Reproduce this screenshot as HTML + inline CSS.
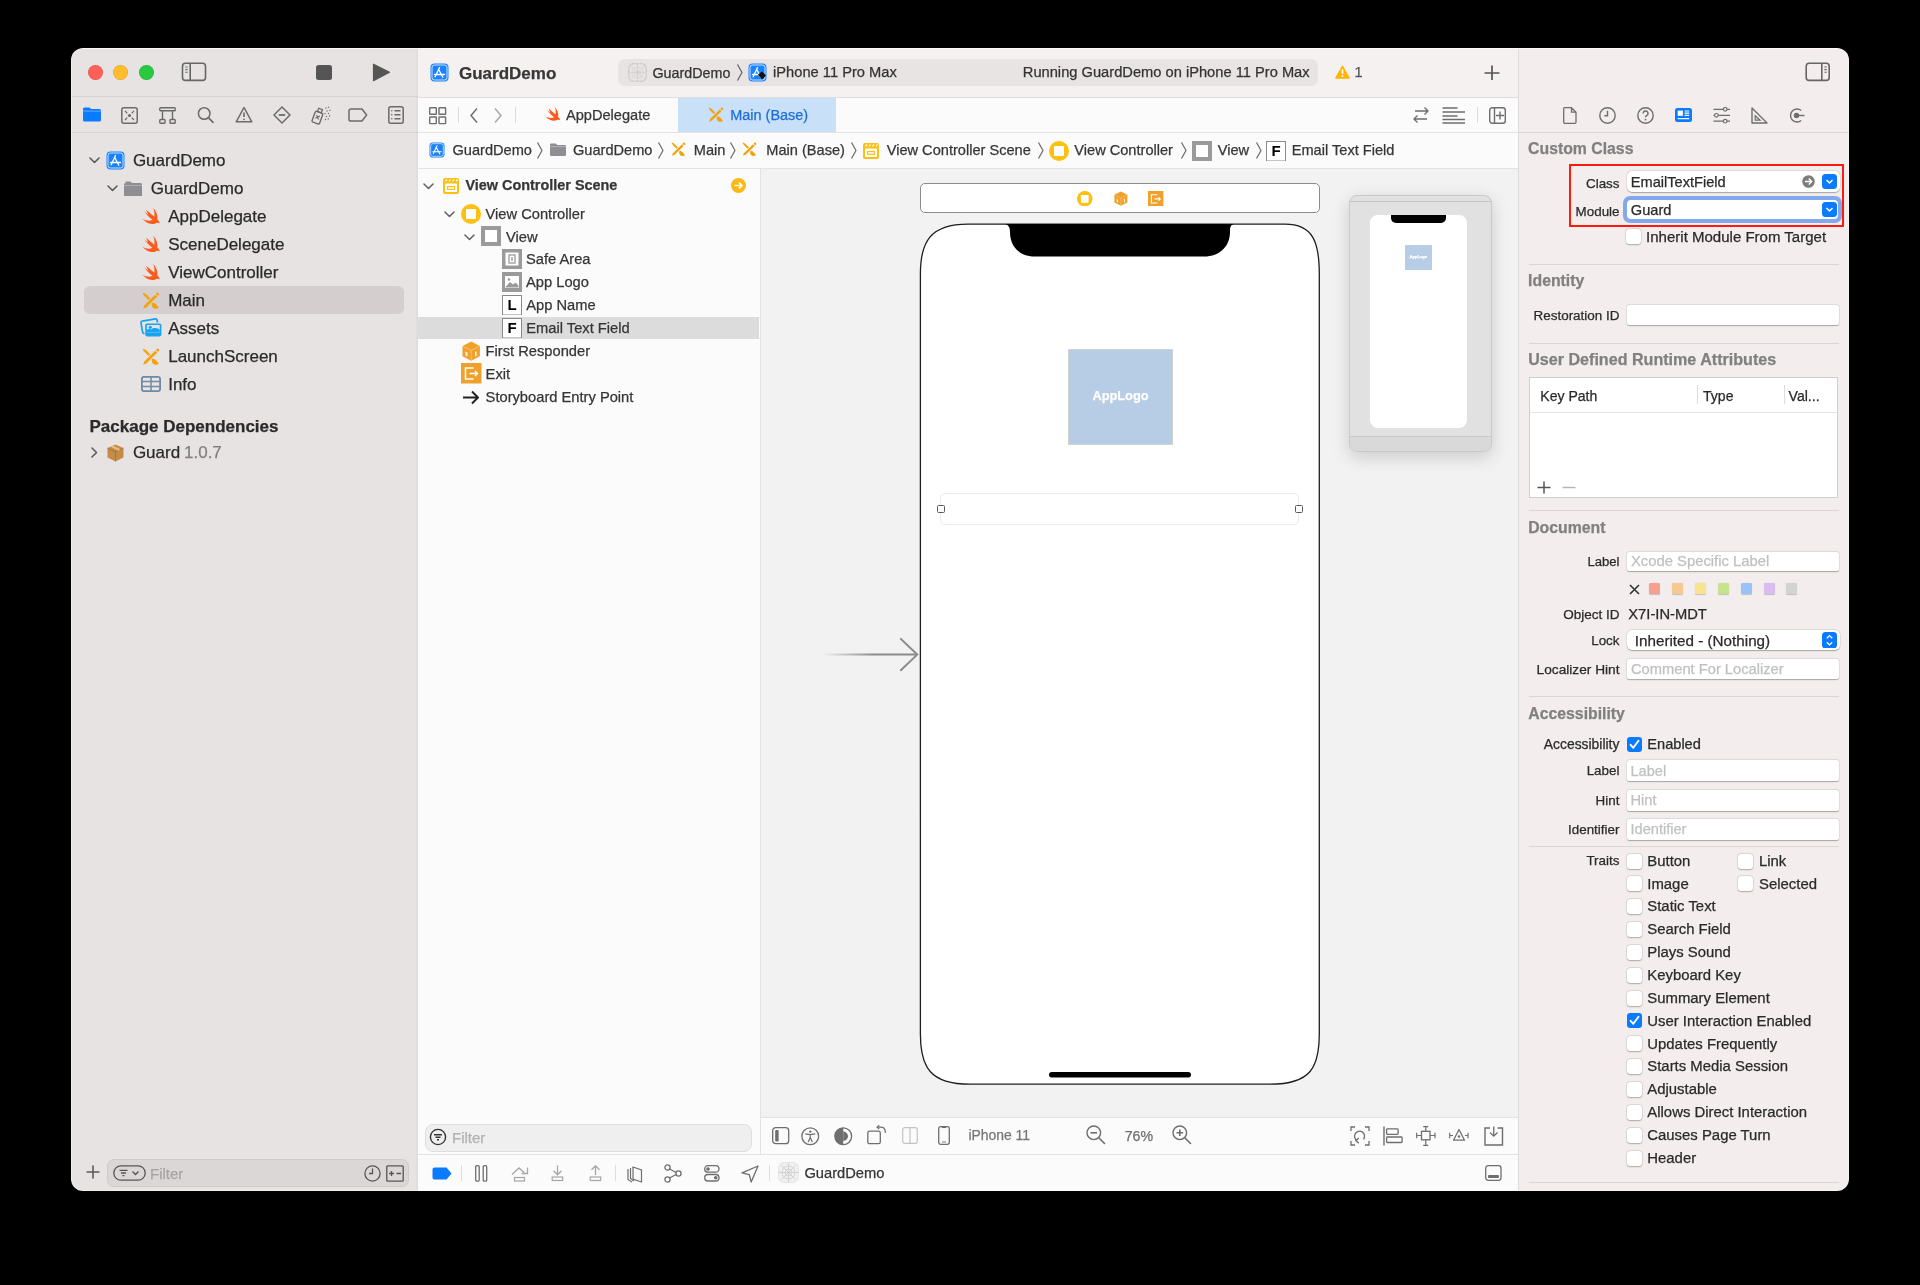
<!DOCTYPE html>
<html><head><meta charset="utf-8"><title>Xcode</title>
<style>
html,body{margin:0;padding:0;}
body{width:1920px;height:1285px;overflow:hidden;background:#000;position:relative;font-family:"Liberation Sans",sans-serif;}
#w{position:absolute;left:0;top:0;width:1920px;height:1285px;clip-path:inset(48px 71px 94px 71px round 12px);will-change:transform;}
#w div,#w svg{position:absolute;}
.t{white-space:nowrap;line-height:1;-webkit-text-stroke:0.25px currentColor;}
</style></head><body><div id="w">
<div style="left:71px;top:48px;width:1778px;height:1143px;background:#fbfbfb;"></div>
<div style="left:71px;top:48px;width:347px;height:1143px;background:#e8e3e3;"></div>
<div style="left:418px;top:48px;width:1100px;height:49px;background:#f6f1f1;"></div>
<div style="left:1518px;top:48px;width:331px;height:1143px;background:#f3eded;"></div>
<div style="left:71px;top:96px;width:347px;height:1px;background:#d9d4d4;"></div>
<div style="left:71px;top:132px;width:347px;height:1px;background:#d9d4d4;"></div>
<div style="left:415px;top:48px;width:3px;height:1143px;background:linear-gradient(90deg,rgba(0,0,0,0),rgba(0,0,0,0.04));"></div>
<div style="left:418px;top:97px;width:1100px;height:36px;background:#fbfbfb;"></div>
<div style="left:418px;top:97px;width:1100px;height:1px;background:#e0dddd;"></div>
<div style="left:418px;top:132px;width:1100px;height:1px;background:#e3e3e3;"></div>
<div style="left:418px;top:133px;width:1100px;height:35px;background:#fbfbfb;"></div>
<div style="left:418px;top:168px;width:1100px;height:1px;background:#e3e3e3;"></div>
<div style="left:418px;top:169px;width:342px;height:985px;background:#fbfbfb;"></div>
<div style="left:760px;top:169px;width:1px;height:985px;background:#e3e3e3;"></div>
<div style="left:761px;top:169px;width:757px;height:948px;background:#f2f2f2;"></div>
<div style="left:760px;top:1117px;width:758px;height:1px;background:#e3e3e3;"></div>
<div style="left:761px;top:1118px;width:757px;height:36px;background:#fbfbfb;"></div>
<div style="left:418px;top:1154px;width:1100px;height:1px;background:#e3e3e3;"></div>
<div style="left:418px;top:1155px;width:1100px;height:36px;background:#fbfbfb;"></div>
<div style="left:1517.5px;top:48px;width:1.5px;height:1143px;background:#e0dbdb;"></div>
<div style="left:1518px;top:132px;width:331px;height:1px;background:#dcd7d7;"></div>
<div style="left:71px;top:48px;width:1778px;height:1143px;box-sizing:border-box;border:1px solid rgba(255,255,255,0.35);border-radius:12px;"></div>
<div style="left:83px;top:48px;width:1754px;height:1px;background:rgba(255,255,255,0.55);"></div>
<div style="left:87.9px;top:64.8px;width:15px;height:15px;border-radius:50%;background:#fe5f57;box-shadow:inset 0 0 0 0.5px rgba(0,0,0,0.12);"></div>
<div style="left:113.2px;top:64.8px;width:15px;height:15px;border-radius:50%;background:#febc2e;box-shadow:inset 0 0 0 0.5px rgba(0,0,0,0.12);"></div>
<div style="left:138.7px;top:64.8px;width:15px;height:15px;border-radius:50%;background:#28c840;box-shadow:inset 0 0 0 0.5px rgba(0,0,0,0.12);"></div>
<svg style="left:181px;top:62px;" width="26" height="20" viewBox="0 0 26 20"><rect x="1.5" y="1.2" width="23" height="17.2" rx="3" fill="none" stroke="#666" stroke-width="1.6"/><path d="M9.2 1.2 V18.4" stroke="#666" stroke-width="1.6"/><path d="M4.3 5 H6.6 M4.3 7.6 H6.6 M4.3 10.2 H6.6" stroke="#666" stroke-width="1.1"/></svg>
<div style="left:316px;top:64.8px;width:15.5px;height:15.2px;background:#555;border-radius:2.5px;"></div>
<svg style="left:372px;top:63px;" width="19" height="19" viewBox="0 0 19 19"><path d="M1.5 1.2 L17.5 9.3 L1.5 17.6 Z" fill="#555" stroke="#555" stroke-width="1.2" stroke-linejoin="round"/></svg>
<svg style="left:83px;top:107px;" width="18" height="15" viewBox="0 0 18 15"><path d="M1.5 0.5 h5 l1.6 1.6 h8.4 a1.5 1.5 0 0 1 1.5 1.5 v9.4 a1.5 1.5 0 0 1 -1.5 1.5 h-15 a1.5 1.5 0 0 1 -1.5 -1.5 v-11 a1.5 1.5 0 0 1 1.5 -1.5z" fill="#0a7aff"/><rect x="0" y="3.6" width="18" height="0.9" fill="#e8e3e3" fill-opacity="0.5"/></svg>
<svg style="left:121px;top:107px;" width="17" height="17" viewBox="0 0 17 17"><rect x="0.8" y="0.8" width="15.4" height="15.4" rx="2" fill="none" stroke="#6b6b6b" stroke-width="1.5"/><path d="M4 4 L6.3 6.3 M13 4 L10.7 6.3 M4 13 L6.3 10.7 M13 13 L10.7 10.7" stroke="#6b6b6b" stroke-width="1.2"/><circle cx="8.5" cy="8.5" r="1.6" fill="#6b6b6b"/></svg>
<svg style="left:159px;top:107px;" width="17" height="17" viewBox="0 0 17 17"><rect x="0.8" y="0.8" width="15.4" height="3" rx="0.8" fill="none" stroke="#6b6b6b" stroke-width="1.4"/><path d="M3.5 3.8 V12.5 M13.5 3.8 V12.5" stroke="#6b6b6b" stroke-width="1.4"/><rect x="0.8" y="12.5" width="5.2" height="3.7" rx="0.8" fill="none" stroke="#6b6b6b" stroke-width="1.4"/><rect x="11" y="12.5" width="5.2" height="3.7" rx="0.8" fill="none" stroke="#6b6b6b" stroke-width="1.4"/></svg>
<svg style="left:197px;top:106px;" width="18" height="18" viewBox="0 0 18 18"><circle cx="7.2" cy="7.5" r="5.8" fill="none" stroke="#6b6b6b" stroke-width="1.5"/><path d="M11.4 11.7 L16 16.3" stroke="#6b6b6b" stroke-width="1.7" stroke-linecap="round"/></svg>
<svg style="left:235px;top:106px;" width="18" height="18" viewBox="0 0 18 18"><path d="M9 1.5 L16.8 15.8 H1.2 Z" fill="none" stroke="#6b6b6b" stroke-width="1.5" stroke-linejoin="round"/><path d="M9 6.5 V11" stroke="#6b6b6b" stroke-width="1.6"/><circle cx="9" cy="13.3" r="0.9" fill="#6b6b6b"/></svg>
<svg style="left:273px;top:106px;" width="18" height="18" viewBox="0 0 18 18"><path d="M9 1 L17 9 L9 17 L1 9 Z" fill="none" stroke="#6b6b6b" stroke-width="1.5" stroke-linejoin="round"/><path d="M5.8 9 H12.2" stroke="#6b6b6b" stroke-width="1.8"/></svg>
<svg style="left:310px;top:106px;" width="22" height="19" viewBox="0 0 22 19"><g transform="rotate(20 8 10)"><rect x="4" y="6" width="8" height="11.5" rx="1.5" fill="none" stroke="#6b6b6b" stroke-width="1.4"/><rect x="6" y="2.5" width="4" height="3.5" fill="none" stroke="#6b6b6b" stroke-width="1.3"/><path d="M6.3 9.5 L9.7 13 M9.7 9.5 L6.3 13" stroke="#6b6b6b" stroke-width="1.2"/></g><g fill="#6b6b6b"><circle cx="16" cy="2" r="0.7"/><circle cx="18.5" cy="1.2" r="0.7"/><circle cx="17" cy="5" r="0.7"/><circle cx="20" cy="4.2" r="0.7"/><circle cx="15" cy="7.5" r="0.7"/><circle cx="18.5" cy="7.5" r="0.7"/><circle cx="16.5" cy="10.5" r="0.7"/><circle cx="19.5" cy="10" r="0.7"/><circle cx="15.5" cy="13.5" r="0.7"/><circle cx="18.2" cy="13" r="0.7"/></g></svg>
<svg style="left:348px;top:108px;" width="20" height="14" viewBox="0 0 20 14"><path d="M2.8 1 H14 L18.6 7 L14 13 H2.8 A1.8 1.8 0 0 1 1 11.2 V2.8 A1.8 1.8 0 0 1 2.8 1 Z" fill="none" stroke="#6b6b6b" stroke-width="1.5" stroke-linejoin="round"/></svg>
<svg style="left:388px;top:106px;" width="16" height="18" viewBox="0 0 16 18"><rect x="0.8" y="0.8" width="14.4" height="16.4" rx="2" fill="none" stroke="#6b6b6b" stroke-width="1.5"/><path d="M6.5 4.8 H12.5 M6.5 8.8 H12.5 M6.5 12.8 H12.5" stroke="#6b6b6b" stroke-width="1.6"/><g fill="#6b6b6b"><circle cx="3.8" cy="4.8" r="0.8"/><circle cx="3.8" cy="8.8" r="0.8"/><circle cx="3.8" cy="12.8" r="0.8"/></g></svg>
<div style="left:84px;top:286px;width:320px;height:28px;background:#d4cece;border-radius:6px;"></div>
<svg style="left:89px;top:157px;" width="11" height="7" viewBox="0 0 11 7"><path d="M1 1 L5.5 5.5 L10 1" fill="none" stroke="#5c5c5c" stroke-width="1.6" stroke-linecap="round" stroke-linejoin="round"/></svg>
<svg style="left:106px;top:150.5px;" width="19" height="19" viewBox="0 0 19 19"><rect x="0.5" y="0.5" width="18" height="18" rx="4.0" fill="#1a82fb"/><rect x="2.0" y="2.0" width="15.0" height="15.0" rx="2.5" fill="none" stroke="#fff" stroke-opacity="0.85" stroke-width="0.9"/><g fill="none" stroke="#fff" stroke-width="1.3" stroke-linecap="round"><path d="M9.5 4.5 L5.2 13.8 M8.6 6.3 L12.8 14.2 M4.5 11.5 L14.5 11.5"/></g></svg>
<div class="t" style="left:132.9px;top:152.2px;font-size:17px;color:#2a2a2a;">GuardDemo</div>
<svg style="left:107px;top:185px;" width="11" height="7" viewBox="0 0 11 7"><path d="M1 1 L5.5 5.5 L10 1" fill="none" stroke="#5c5c5c" stroke-width="1.6" stroke-linecap="round" stroke-linejoin="round"/></svg>
<svg style="left:124px;top:181px;" width="18" height="15" viewBox="0 0 18 15"><path d="M1.5 0.5 h5 l1.5 1.5 h8.5 a1.5 1.5 0 0 1 1.5 1.5 v11.5 a1.5 1.5 0 0 1 -1.5 1.5 h-15 a1.5 1.5 0 0 1 -1.5 -1.5 v-11.5 a1.5 1.5 0 0 1 1.5 -1.5z" fill="#8e8e93"/><rect x="0" y="4" width="18" height="0.8" fill="#fff" fill-opacity="0.35"/></svg>
<div class="t" style="left:150.8px;top:180.2px;font-size:17px;color:#2a2a2a;">GuardDemo</div>
<svg style="left:142.3px;top:207.5px;" width="18" height="17" viewBox="0 0 18 17"><path d="M11.2 0 C14.5 3 16 7.5 15.3 11.5 C16.5 12.5 17.5 14 17.7 15.5 C16.6 14.8 15.2 14.6 14 15.2 C11 16.8 6 16.8 0.3 10.8 C4 13 8 13.2 10.5 11.8 C7.5 9.5 4.5 6.5 2 2.9 C3.5 4.3 5 5.5 6.2 6.4 C5.5 5 4.6 3.3 4.1 1.5 C6.5 4 9 6.2 12.3 8.7 C12.8 6 12.5 3 11.2 0 Z" fill="#fd5a1e"/></svg>
<div class="t" style="left:168.2px;top:208.2px;font-size:17px;color:#2a2a2a;">AppDelegate</div>
<svg style="left:142.3px;top:235.5px;" width="18" height="17" viewBox="0 0 18 17"><path d="M11.2 0 C14.5 3 16 7.5 15.3 11.5 C16.5 12.5 17.5 14 17.7 15.5 C16.6 14.8 15.2 14.6 14 15.2 C11 16.8 6 16.8 0.3 10.8 C4 13 8 13.2 10.5 11.8 C7.5 9.5 4.5 6.5 2 2.9 C3.5 4.3 5 5.5 6.2 6.4 C5.5 5 4.6 3.3 4.1 1.5 C6.5 4 9 6.2 12.3 8.7 C12.8 6 12.5 3 11.2 0 Z" fill="#fd5a1e"/></svg>
<div class="t" style="left:168.2px;top:236.2px;font-size:17px;color:#2a2a2a;">SceneDelegate</div>
<svg style="left:142.3px;top:263.5px;" width="18" height="17" viewBox="0 0 18 17"><path d="M11.2 0 C14.5 3 16 7.5 15.3 11.5 C16.5 12.5 17.5 14 17.7 15.5 C16.6 14.8 15.2 14.6 14 15.2 C11 16.8 6 16.8 0.3 10.8 C4 13 8 13.2 10.5 11.8 C7.5 9.5 4.5 6.5 2 2.9 C3.5 4.3 5 5.5 6.2 6.4 C5.5 5 4.6 3.3 4.1 1.5 C6.5 4 9 6.2 12.3 8.7 C12.8 6 12.5 3 11.2 0 Z" fill="#fd5a1e"/></svg>
<div class="t" style="left:168.2px;top:264.2px;font-size:17px;color:#2a2a2a;">ViewController</div>
<svg style="left:142px;top:291.5px;" width="18" height="18" viewBox="0 0 18 18"><g transform="scale(1.0)" fill="#f4a20a"><path d="M1.1 16.6 L2.3 13.4 L13.2 2.8 L15.1 4.7 L4.3 15.4 Z"/><circle cx="15.7" cy="2.1" r="1.5"/><path d="M0.6 0.7 C2 0.9 3.2 1.5 4.2 2.3 L8.2 6.4 L6.6 8 L2.6 4 C1.6 3 1 1.9 0.6 0.7 Z"/><path d="M9.6 11.3 L11.4 10.4 C13.2 11.2 14.8 12.8 16.6 15.2 L16 16.5 C13.8 16.9 11.6 16.6 10.6 15.2 C9.9 14.1 9.6 12.7 9.6 11.3 Z"/></g></svg>
<div class="t" style="left:168.2px;top:292.2px;font-size:17px;color:#2a2a2a;">Main</div>
<svg style="left:140.3px;top:318px;" width="22" height="19" viewBox="0 0 22 19"><path d="M2.2 3.2 L15.5 0.9 A1.4 1.4 0 0 1 17.1 2 L17.5 4.6" fill="none" stroke="#16a4f2" stroke-width="1.7" stroke-linejoin="round"/><path d="M2.2 3.2 A1.4 1.4 0 0 0 1 4.8 L2.6 14.2 A1.4 1.4 0 0 0 4.4 15.3" fill="none" stroke="#16a4f2" stroke-width="1.7"/><rect x="5.2" y="5.4" width="16.2" height="13" rx="1.8" fill="#16a4f2"/><rect x="6.9" y="7" width="12.8" height="7.6" fill="#e8e3e3"/><path d="M6.9 12 C8.5 10.5 9.5 10.5 11 11.8 C12.5 9.8 15 9.2 19.7 11.5 V14.6 H6.9 Z" fill="#16a4f2"/><circle cx="10.3" cy="9.3" r="1.6" fill="#16a4f2"/></svg>
<div class="t" style="left:168.2px;top:320.2px;font-size:17px;color:#2a2a2a;">Assets</div>
<svg style="left:142px;top:347.5px;" width="18" height="18" viewBox="0 0 18 18"><g transform="scale(1.0)" fill="#f4a20a"><path d="M1.1 16.6 L2.3 13.4 L13.2 2.8 L15.1 4.7 L4.3 15.4 Z"/><circle cx="15.7" cy="2.1" r="1.5"/><path d="M0.6 0.7 C2 0.9 3.2 1.5 4.2 2.3 L8.2 6.4 L6.6 8 L2.6 4 C1.6 3 1 1.9 0.6 0.7 Z"/><path d="M9.6 11.3 L11.4 10.4 C13.2 11.2 14.8 12.8 16.6 15.2 L16 16.5 C13.8 16.9 11.6 16.6 10.6 15.2 C9.9 14.1 9.6 12.7 9.6 11.3 Z"/></g></svg>
<div class="t" style="left:168.2px;top:348.2px;font-size:17px;color:#2a2a2a;">LaunchScreen</div>
<svg style="left:141px;top:376px;" width="20" height="16" viewBox="0 0 20 16"><rect x="0.9" y="0.9" width="18.2" height="14.2" rx="2" fill="none" stroke="#6f8aa0" stroke-width="1.8"/><path d="M0.9 5.6 H19.1 M0.9 10.4 H19.1 M10 0.9 V15.1" stroke="#6f8aa0" stroke-width="1.5"/></svg>
<div class="t" style="left:168.2px;top:376.2px;font-size:17px;color:#2a2a2a;">Info</div>
<div class="t" style="left:89.5px;top:418.2px;font-size:17px;color:#2a2a2a;font-weight:bold;">Package Dependencies</div>
<svg style="left:91px;top:447px;" width="7" height="11" viewBox="0 0 7 11"><path d="M1 1 L5.5 5.5 L1 10" fill="none" stroke="#5c5c5c" stroke-width="1.6" stroke-linecap="round" stroke-linejoin="round"/></svg>
<svg style="left:107px;top:443.5px;" width="17" height="18" viewBox="0 0 17 18"><path d="M8.5 0.5 L16.5 4 V13.5 L8.5 17.5 L0.5 13.5 V4 Z" fill="#c58c48"/><path d="M0.5 4 L8.5 8 L16.5 4 M8.5 8 V17.5" stroke="#8a5a25" stroke-width="0.8" fill="none" stroke-opacity="0.6"/><path d="M4.5 2.2 L12.5 6" stroke="#e8c08a" stroke-width="2"/></svg>
<div class="t" style="left:132.9px;top:444.2px;font-size:17px;color:#2a2a2a;">Guard</div>
<div class="t" style="left:184px;top:444.2px;font-size:17px;color:#7f7f7f;">1.0.7</div>
<svg style="left:85px;top:1164px;" width="16" height="16" viewBox="0 0 16 16"><path d="M8 1.5 V14.5 M1.5 8 H14.5" stroke="#5a5a5a" stroke-width="1.6"/></svg>
<div style="left:107px;top:1159px;width:302px;height:28px;box-sizing:border-box;background:#dcd7d7;border:1px solid #d0cbcb;border-radius:7px;"></div>
<svg style="left:113px;top:1165px;" width="33" height="16" viewBox="0 0 33 16"><rect x="0.8" y="0.8" width="31.4" height="14.4" rx="7.2" fill="none" stroke="#555" stroke-width="1.3"/><path d="M6.5 5.3 H14.5 M8 8 H13 M9.5 10.7 H11.5" stroke="#555" stroke-width="1.3"/><path d="M19.5 6.5 L22.5 9.5 L25.5 6.5" fill="none" stroke="#555" stroke-width="1.4"/></svg>
<div class="t" style="left:150px;top:1165.68px;font-size:15px;color:#a8a4a4;">Filter</div>
<svg style="left:364px;top:1165px;" width="17" height="17" viewBox="0 0 17 17"><circle cx="8.5" cy="8.5" r="7.6" fill="none" stroke="#555" stroke-width="1.3"/><path d="M8.5 3.5 V8.5 H5" fill="none" stroke="#555" stroke-width="1.3"/></svg>
<svg style="left:386px;top:1165px;" width="18" height="17" viewBox="0 0 18 17"><rect x="0.8" y="0.8" width="16.4" height="15.4" rx="1" fill="none" stroke="#555" stroke-width="1.3"/><path d="M3 8.5 H8 M5.5 6 V11 M10.5 8.5 H15" stroke="#555" stroke-width="1.3"/></svg>
<svg style="left:430px;top:63px;" width="19" height="19" viewBox="0 0 19 19"><rect x="0.5" y="0.5" width="18" height="18" rx="4.0" fill="#1a82fb"/><rect x="2.0" y="2.0" width="15.0" height="15.0" rx="2.5" fill="none" stroke="#fff" stroke-opacity="0.85" stroke-width="0.9"/><g fill="none" stroke="#fff" stroke-width="1.3" stroke-linecap="round"><path d="M9.5 4.5 L5.2 13.8 M8.6 6.3 L12.8 14.2 M4.5 11.5 L14.5 11.5"/></g></svg>
<div class="t" style="left:459px;top:65.0px;font-size:17px;color:#383838;font-weight:bold;">GuardDemo</div>
<div style="left:618px;top:59px;width:700px;height:27px;background:#e9e4e4;border-radius:7px;"></div>
<svg style="left:627.5px;top:63px;" width="19" height="19" viewBox="0 0 19 19"><rect x="0.8" y="0.8" width="17.4" height="17.4" rx="4.5" fill="none" stroke="#b8b8b8" stroke-width="1.1" stroke-dasharray="1.3 0.9"/><g fill="none" stroke="#c4c4c4" stroke-width="0.8" stroke-dasharray="1 0.8"><circle cx="9.5" cy="9.5" r="5.5"/><circle cx="9.5" cy="9.5" r="2.8"/><path d="M0.8 9.5 H18.2 M9.5 0.8 V18.2 M3 3 L16 16 M16 3 L3 16"/></g></svg>
<div class="t" style="left:652.5px;top:65.52px;font-size:14.3px;color:#333;">GuardDemo</div>
<svg style="left:736px;top:63px;" width="8" height="19" viewBox="0 0 8 19"><path d="M1.5 1.5 L6 9.5 L1.5 17.5" fill="none" stroke="#555" stroke-width="1.1"/></svg>
<svg style="left:748.3px;top:63px;" width="19" height="19" viewBox="0 0 19 19"><rect x="0.5" y="0.5" width="18" height="18" rx="4.0" fill="#1a82fb"/><rect x="2.0" y="2.0" width="15.0" height="15.0" rx="2.5" fill="none" stroke="#fff" stroke-opacity="0.85" stroke-width="0.9"/><g fill="none" stroke="#fff" stroke-width="1.3" stroke-linecap="round"><path d="M9.5 4.5 L5.2 13.8 M8.6 6.3 L12.8 14.2 M4.5 11.5 L14.5 11.5"/></g><path d="M10 11.5 l4 -3 l4 4 l-4 4z" fill="#111"/></svg>
<div class="t" style="left:773px;top:65.33px;font-size:14.7px;color:#333;">iPhone 11 Pro Max</div>
<div class="t" style="right:610.4000000000001px;top:65.34px;font-size:14.68px;color:#333;">Running GuardDemo on iPhone 11 Pro Max</div>
<svg style="left:1335px;top:65px;" width="15" height="14" viewBox="0 0 15 14"><path d="M7.5 0.8 L14.5 13.2 H0.5 Z" fill="#fdb600" stroke="#fdb600" stroke-width="1" stroke-linejoin="round"/><path d="M7.5 4.3 V9" stroke="#fff" stroke-width="1.6"/><circle cx="7.5" cy="11" r="0.9" fill="#fff"/></svg>
<div class="t" style="left:1354.4px;top:65.12px;font-size:14.5px;color:#555;">1</div>
<svg style="left:1484px;top:65px;" width="16" height="16" viewBox="0 0 16 16"><path d="M8 0.5 V15 M0.5 8 H15.5" stroke="#555" stroke-width="1.7"/></svg>
<svg style="left:1805px;top:62px;" width="26" height="20" viewBox="0 0 26 20"><rect x="1.2" y="1.2" width="23" height="17.2" rx="3" fill="none" stroke="#666" stroke-width="1.6"/><path d="M16.8 1.2 V18.4" stroke="#666" stroke-width="1.6"/><path d="M19.4 5 H21.7 M19.4 7.6 H21.7 M19.4 10.2 H21.7" stroke="#666" stroke-width="1.1"/></svg>
<svg style="left:429px;top:107px;" width="18" height="18" viewBox="0 0 18 18"><g fill="none" stroke="#6e6e6e" stroke-width="1.4"><rect x="0.7" y="0.7" width="6.6" height="6.6" rx="0.5"/><rect x="10" y="0.7" width="6.6" height="6.6" rx="0.5"/><rect x="0.7" y="10" width="6.6" height="6.6" rx="0.5"/><rect x="10" y="10" width="6.6" height="6.6" rx="0.5"/></g></svg>
<div style="left:457.5px;top:107px;width:1px;height:16px;background:#dcdcdc;"></div>
<svg style="left:469px;top:107px;" width="10" height="17" viewBox="0 0 10 17"><path d="M8 1.5 L2 8.5 L8 15.5" fill="none" stroke="#6e6e6e" stroke-width="1.5"/></svg>
<svg style="left:493px;top:107px;" width="10" height="17" viewBox="0 0 10 17"><path d="M2 1.5 L8 8.5 L2 15.5" fill="none" stroke="#a8a8a8" stroke-width="1.5"/></svg>
<div style="left:514.5px;top:107px;width:1px;height:16px;background:#dcdcdc;"></div>
<svg style="left:545px;top:107px;" width="16" height="15" viewBox="0 0 16 15"><g transform="scale(0.86)"><path d="M11.2 0 C14.5 3 16 7.5 15.3 11.5 C16.5 12.5 17.5 14 17.7 15.5 C16.6 14.8 15.2 14.6 14 15.2 C11 16.8 6 16.8 0.3 10.8 C4 13 8 13.2 10.5 11.8 C7.5 9.5 4.5 6.5 2 2.9 C3.5 4.3 5 5.5 6.2 6.4 C5.5 5 4.6 3.3 4.1 1.5 C6.5 4 9 6.2 12.3 8.7 C12.8 6 12.5 3 11.2 0 Z" fill="#fd5a1e"/></g></svg>
<div class="t" style="left:566px;top:108.38px;font-size:14.6px;color:#363636;">AppDelegate</div>
<div style="left:678px;top:98px;width:158px;height:34px;background:#c9e0f9;"></div>
<svg style="left:708px;top:107px;" width="16" height="16" viewBox="0 0 16 16"><g transform="scale(0.8888888888888888)" fill="#f4a20a"><path d="M1.1 16.6 L2.3 13.4 L13.2 2.8 L15.1 4.7 L4.3 15.4 Z"/><circle cx="15.7" cy="2.1" r="1.5"/><path d="M0.6 0.7 C2 0.9 3.2 1.5 4.2 2.3 L8.2 6.4 L6.6 8 L2.6 4 C1.6 3 1 1.9 0.6 0.7 Z"/><path d="M9.6 11.3 L11.4 10.4 C13.2 11.2 14.8 12.8 16.6 15.2 L16 16.5 C13.8 16.9 11.6 16.6 10.6 15.2 C9.9 14.1 9.6 12.7 9.6 11.3 Z"/></g></svg>
<div class="t" style="left:730.2px;top:108.44px;font-size:14.47px;color:#1d6fd6;">Main (Base)</div>
<svg style="left:1412px;top:106px;" width="18" height="18" viewBox="0 0 18 18"><path d="M3 5 H16 M12.5 1.5 L16 5 L12.5 8.5 M15 13 H2 M5.5 9.5 L2 13 L5.5 16.5" fill="none" stroke="#6e6e6e" stroke-width="1.4" stroke-linejoin="round"/></svg>
<svg style="left:1442px;top:107px;" width="24" height="17" viewBox="0 0 24 17"><path d="M0.5 1 H15.5 M0.5 5 H23 M0.5 9 H15.5 M0.5 12.5 H23 M0.5 16 H23" stroke="#6e6e6e" stroke-width="1.4"/></svg>
<div style="left:1476.8px;top:107px;width:1px;height:16px;background:#dcdcdc;"></div>
<svg style="left:1489px;top:107px;" width="17" height="17" viewBox="0 0 17 17"><rect x="0.7" y="0.7" width="15.6" height="15.6" rx="2.5" fill="none" stroke="#6e6e6e" stroke-width="1.4"/><path d="M5.5 0.7 V16.3 M11 4.5 V12.5 M7 8.5 H15" stroke="#6e6e6e" stroke-width="1.4"/></svg>
<svg style="left:428.8px;top:142px;" width="16" height="16" viewBox="0 0 16 16"><rect x="0.5" y="0.5" width="15" height="15" rx="3.3684210526315788" fill="#1a82fb"/><rect x="1.6842105263157894" y="1.6842105263157894" width="12.631578947368421" height="12.631578947368421" rx="2.1052631578947367" fill="none" stroke="#fff" stroke-opacity="0.85" stroke-width="0.7578947368421053"/><g fill="none" stroke="#fff" stroke-width="1.0947368421052632" stroke-linecap="round"><path d="M8.0 3.789473684210526 L4.378947368421053 11.621052631578948 M7.242105263157894 5.3052631578947365 L10.778947368421052 11.957894736842103 M3.789473684210526 9.68421052631579 L12.210526315789473 9.68421052631579"/></g></svg>
<div class="t" style="left:452.5px;top:143.38px;font-size:14.6px;color:#363636;">GuardDemo</div>
<svg style="left:535.5px;top:141px;" width="8" height="19" viewBox="0 0 8 19"><path d="M1.5 1.5 L6 9.5 L1.5 17.5" fill="none" stroke="#6a6a6a" stroke-width="1.2"/></svg>
<svg style="left:549.5px;top:143px;" width="16" height="14" viewBox="0 0 16 14"><path d="M1.3 0.5 h4.5 l1.4 1.4 h7.5 a1.3 1.3 0 0 1 1.3 1.3 v8.5 a1.3 1.3 0 0 1 -1.3 1.3 h-13.4 a1.3 1.3 0 0 1 -1.3 -1.3 v-9.9 a1.3 1.3 0 0 1 1.3 -1.3z" fill="#8e8e93"/><rect x="0" y="3.3" width="16" height="0.8" fill="#fff" fill-opacity="0.4"/></svg>
<div class="t" style="left:573px;top:143.38px;font-size:14.6px;color:#363636;">GuardDemo</div>
<svg style="left:657px;top:141px;" width="8" height="19" viewBox="0 0 8 19"><path d="M1.5 1.5 L6 9.5 L1.5 17.5" fill="none" stroke="#6a6a6a" stroke-width="1.2"/></svg>
<svg style="left:670.5px;top:142px;" width="15" height="15" viewBox="0 0 15 15"><g transform="scale(0.8333333333333334)" fill="#f4a20a"><path d="M1.1 16.6 L2.3 13.4 L13.2 2.8 L15.1 4.7 L4.3 15.4 Z"/><circle cx="15.7" cy="2.1" r="1.5"/><path d="M0.6 0.7 C2 0.9 3.2 1.5 4.2 2.3 L8.2 6.4 L6.6 8 L2.6 4 C1.6 3 1 1.9 0.6 0.7 Z"/><path d="M9.6 11.3 L11.4 10.4 C13.2 11.2 14.8 12.8 16.6 15.2 L16 16.5 C13.8 16.9 11.6 16.6 10.6 15.2 C9.9 14.1 9.6 12.7 9.6 11.3 Z"/></g></svg>
<div class="t" style="left:693.8px;top:143.38px;font-size:14.6px;color:#363636;">Main</div>
<svg style="left:729px;top:141px;" width="8" height="19" viewBox="0 0 8 19"><path d="M1.5 1.5 L6 9.5 L1.5 17.5" fill="none" stroke="#6a6a6a" stroke-width="1.2"/></svg>
<svg style="left:742px;top:142px;" width="15" height="15" viewBox="0 0 15 15"><g transform="scale(0.8333333333333334)" fill="#f4a20a"><path d="M1.1 16.6 L2.3 13.4 L13.2 2.8 L15.1 4.7 L4.3 15.4 Z"/><circle cx="15.7" cy="2.1" r="1.5"/><path d="M0.6 0.7 C2 0.9 3.2 1.5 4.2 2.3 L8.2 6.4 L6.6 8 L2.6 4 C1.6 3 1 1.9 0.6 0.7 Z"/><path d="M9.6 11.3 L11.4 10.4 C13.2 11.2 14.8 12.8 16.6 15.2 L16 16.5 C13.8 16.9 11.6 16.6 10.6 15.2 C9.9 14.1 9.6 12.7 9.6 11.3 Z"/></g></svg>
<div class="t" style="left:766.3px;top:143.38px;font-size:14.6px;color:#363636;">Main (Base)</div>
<svg style="left:850px;top:141px;" width="8" height="19" viewBox="0 0 8 19"><path d="M1.5 1.5 L6 9.5 L1.5 17.5" fill="none" stroke="#6a6a6a" stroke-width="1.2"/></svg>
<svg style="left:862px;top:141.5px;" width="18" height="18" viewBox="0 0 18 18"><rect x="1.0" y="1.0" width="16.0" height="16.0" rx="2.0" fill="#fcbf12"/><rect x="3.0" y="6.5" width="12.0" height="8.5" rx="0.8" fill="#fff"/><rect x="5.5" y="9.5" width="7.0" height="2.8" fill="none" stroke="#fcbf12" stroke-width="1.2"/><path d="M3.5 4.3 l1.5 -2.0 M7.0 4.3 l1.5 -2.0 M10.5 4.3 l1.5 -2.0 M14.0 4.3 l1.5 -2.0" stroke="#fff" stroke-width="1.1"/></svg>
<div class="t" style="left:886.7px;top:143.38px;font-size:14.6px;color:#363636;">View Controller Scene</div>
<svg style="left:1037px;top:141px;" width="8" height="19" viewBox="0 0 8 19"><path d="M1.5 1.5 L6 9.5 L1.5 17.5" fill="none" stroke="#6a6a6a" stroke-width="1.2"/></svg>
<svg style="left:1049px;top:140.5px;" width="20" height="20" viewBox="0 0 20 20"><circle cx="10.0" cy="10.0" r="10.0" fill="#fcc010"/><rect x="5.0" y="5.0" width="10.0" height="10.0" rx="0.8" fill="#fff"/></svg>
<div class="t" style="left:1074.3px;top:143.38px;font-size:14.6px;color:#363636;">View Controller</div>
<svg style="left:1180px;top:141px;" width="8" height="19" viewBox="0 0 8 19"><path d="M1.5 1.5 L6 9.5 L1.5 17.5" fill="none" stroke="#6a6a6a" stroke-width="1.2"/></svg>
<svg style="left:1192.4px;top:140.5px;" width="20" height="20" viewBox="0 0 20 20"><rect x="0" y="0" width="20" height="20" fill="#9a9a9a"/><rect x="4.0" y="4.0" width="12.0" height="12.0" fill="#fff"/></svg>
<div class="t" style="left:1217.7px;top:143.38px;font-size:14.6px;color:#363636;">View</div>
<svg style="left:1255px;top:141px;" width="8" height="19" viewBox="0 0 8 19"><path d="M1.5 1.5 L6 9.5 L1.5 17.5" fill="none" stroke="#6a6a6a" stroke-width="1.2"/></svg>
<svg style="left:1266px;top:140.5px;" width="20" height="20" viewBox="0 0 20 20"><rect x="0.5" y="0.5" width="19" height="19.5" fill="#fff" stroke="#8a8a8a" stroke-width="1"/><text x="10.2" y="15.3" font-family="Liberation Sans" font-weight="bold" font-size="15" text-anchor="middle" fill="#000">F</text></svg>
<div class="t" style="left:1291.7px;top:143.38px;font-size:14.6px;color:#363636;">Email Text Field</div>
<div style="left:418px;top:317px;width:341px;height:22px;background:#dcdcdc;"></div>
<svg style="left:423px;top:182.5px;" width="11" height="7" viewBox="0 0 11 7"><path d="M1 1 L5.5 5.5 L10 1" fill="none" stroke="#666" stroke-width="1.6" stroke-linecap="round" stroke-linejoin="round"/></svg>
<svg style="left:442px;top:176.5px;" width="18" height="18" viewBox="0 0 18 18"><rect x="1.0" y="1.0" width="16.0" height="16.0" rx="2.0" fill="#fcbf12"/><rect x="3.0" y="6.5" width="12.0" height="8.5" rx="0.8" fill="#fff"/><rect x="5.5" y="9.5" width="7.0" height="2.8" fill="none" stroke="#fcbf12" stroke-width="1.2"/><path d="M3.5 4.3 l1.5 -2.0 M7.0 4.3 l1.5 -2.0 M10.5 4.3 l1.5 -2.0 M14.0 4.3 l1.5 -2.0" stroke="#fff" stroke-width="1.1"/></svg>
<div class="t" style="left:465.5px;top:178.46px;font-size:14.42px;color:#363636;font-weight:bold;">View Controller Scene</div>
<svg style="left:730px;top:177px;" width="17" height="17" viewBox="0 0 17 17"><circle cx="8.5" cy="8.5" r="7.5" fill="#fdb813"/><path d="M4.5 8.5 H11.5 M9 5.5 L12 8.5 L9 11.5" fill="none" stroke="#fff" stroke-width="1.7"/></svg>
<svg style="left:443.5px;top:210.5px;" width="11" height="7" viewBox="0 0 11 7"><path d="M1 1 L5.5 5.5 L10 1" fill="none" stroke="#666" stroke-width="1.6" stroke-linecap="round" stroke-linejoin="round"/></svg>
<svg style="left:461px;top:203.5px;" width="20" height="20" viewBox="0 0 20 20"><circle cx="10.0" cy="10.0" r="10.0" fill="#fcc010"/><rect x="5.0" y="5.0" width="10.0" height="10.0" rx="0.8" fill="#fff"/></svg>
<div class="t" style="left:485.5px;top:206.58px;font-size:14.7px;color:#363636;">View Controller</div>
<svg style="left:464px;top:233.5px;" width="11" height="7" viewBox="0 0 11 7"><path d="M1 1 L5.5 5.5 L10 1" fill="none" stroke="#666" stroke-width="1.6" stroke-linecap="round" stroke-linejoin="round"/></svg>
<svg style="left:481.4px;top:226px;" width="20" height="20" viewBox="0 0 20 20"><rect x="0" y="0" width="20" height="20" fill="#9a9a9a"/><rect x="4.0" y="4.0" width="12.0" height="12.0" fill="#fff"/></svg>
<div class="t" style="left:506px;top:229.58px;font-size:14.7px;color:#363636;">View</div>
<svg style="left:502px;top:249px;" width="20" height="20" viewBox="0 0 20 20"><rect x="0" y="0" width="20" height="20" fill="#9a9a9a"/><rect x="3.5" y="3.5" width="13" height="13" fill="#fff"/><rect x="7" y="6" width="6" height="8" fill="none" stroke="#9a9a9a" stroke-width="1.3"/><rect x="9.3" y="8" width="1.4" height="4" fill="#9a9a9a"/></svg>
<div class="t" style="left:526px;top:252.33px;font-size:14.7px;color:#363636;">Safe Area</div>
<svg style="left:502px;top:272px;" width="20" height="20" viewBox="0 0 20 20"><rect x="0" y="0" width="20" height="20" fill="#9a9a9a"/><rect x="3" y="4" width="14" height="12" fill="#fff"/><path d="M3.5 15 L8 10 L11 12.5 L13.5 10.5 L16.5 13.5 V15.5 H3.5Z" fill="#9a9a9a"/><circle cx="7" cy="7.5" r="1.3" fill="#9a9a9a"/></svg>
<div class="t" style="left:526px;top:275.33px;font-size:14.7px;color:#363636;">App Logo</div>
<svg style="left:502px;top:295px;" width="20" height="20" viewBox="0 0 20 20"><rect x="0.5" y="0.5" width="19" height="19.5" fill="#fff" stroke="#8a8a8a" stroke-width="1"/><text x="10.2" y="15.3" font-family="Liberation Sans" font-weight="bold" font-size="15" text-anchor="middle" fill="#000">L</text></svg>
<div class="t" style="left:526.25px;top:298.13px;font-size:14.7px;color:#363636;">App Name</div>
<svg style="left:502px;top:318px;" width="20" height="20" viewBox="0 0 20 20"><rect x="0.5" y="0.5" width="19" height="19.5" fill="#fff" stroke="#8a8a8a" stroke-width="1"/><text x="10.2" y="15.3" font-family="Liberation Sans" font-weight="bold" font-size="15" text-anchor="middle" fill="#000">F</text></svg>
<div class="t" style="left:526.25px;top:320.93px;font-size:14.7px;color:#363636;">Email Text Field</div>
<svg style="left:462px;top:340.5px;" width="19" height="20.5" viewBox="0 0 19 20.5"><path d="M9.2 0.5 L17.9 5 V15.2 L9.2 19.8 L0.5 15.2 V5 Z" fill="#f0a12b"/><path d="M0.5 5 L9.2 9.5 L17.9 5 M9.2 9.5 V19.8" stroke="#fff" stroke-opacity="0.45" stroke-width="0.7" fill="none"/><path d="M3.5 10.5 v4 l2 1 v-4z" fill="#fff" fill-opacity="0.85"/><path d="M13 11 l1.5 -0.8 v5 l-1 0.5z" fill="#fff"/></svg>
<div class="t" style="left:485.6px;top:344.08px;font-size:14.7px;color:#363636;">First Responder</div>
<svg style="left:461px;top:363px;" width="20.5" height="20.5" viewBox="0 0 20.5 20.5"><rect x="0" y="0" width="20.5" height="20.5" fill="#f0a12b"/><path d="M12.5 5 H4.5 V16 H12.5 M12.5 13.5" fill="none" stroke="#fff" stroke-width="1.5"/><path d="M8.5 10.5 H16.5 M14 8 L16.5 10.5 L14 13" fill="none" stroke="#fff" stroke-width="1.4"/></svg>
<div class="t" style="left:485.6px;top:366.58px;font-size:14.7px;color:#363636;">Exit</div>
<svg style="left:462px;top:389.5px;" width="18" height="15" viewBox="0 0 18 15"><path d="M1 7.5 H16 M10 1.5 L16 7.5 L10 13.5" fill="none" stroke="#222" stroke-width="2" stroke-linejoin="round"/></svg>
<div class="t" style="left:485.6px;top:389.73px;font-size:14.7px;color:#363636;">Storyboard Entry Point</div>
<div style="left:425px;top:1123.5px;width:327px;height:28px;box-sizing:border-box;background:#efefef;border:1px solid #dedede;border-radius:8px;"></div>
<svg style="left:429px;top:1128px;" width="18" height="18" viewBox="0 0 18 18"><circle cx="9" cy="9" r="7.6" fill="none" stroke="#333" stroke-width="1.4"/><path d="M5 6.8 H13 M6.5 9.3 H11.5 M8 11.8 H10" stroke="#333" stroke-width="1.4"/></svg>
<div class="t" style="left:452px;top:1129.98px;font-size:15px;color:#b0b0b0;">Filter</div>
<svg style="left:431.5px;top:1166.5px;" width="20" height="13" viewBox="0 0 20 13"><path d="M2.5 0.5 H14.5 L19.5 6.5 L14.5 12.5 H2.5 A2 2 0 0 1 0.5 10.5 V2.5 A2 2 0 0 1 2.5 0.5Z" fill="#0a7aff"/></svg>
<div style="left:461px;top:1165px;width:1px;height:16px;background:#dedede;"></div>
<svg style="left:475px;top:1164.5px;" width="13" height="17" viewBox="0 0 13 17"><rect x="0.7" y="0.7" width="3.5" height="15.5" rx="1.2" fill="none" stroke="#6e6e6e" stroke-width="1.3"/><rect x="8.2" y="0.7" width="3.5" height="15.5" rx="1.2" fill="none" stroke="#6e6e6e" stroke-width="1.3"/></svg>
<svg style="left:511px;top:1166px;" width="18" height="16" viewBox="0 0 18 16"><path d="M1 8.5 L8 2 L13 6.5 M10.5 7.5 H16.5 V1.5" fill="none" stroke="#a6a6a6" stroke-width="1.3"/><rect x="3.5" y="11.5" width="10" height="3.5" fill="none" stroke="#a6a6a6" stroke-width="1.2"/></svg>
<svg style="left:551px;top:1164.5px;" width="13" height="17" viewBox="0 0 13 17"><path d="M6.5 0.5 V9.5 M2.5 5.8 L6.5 9.8 L10.5 5.8" fill="none" stroke="#a6a6a6" stroke-width="1.3"/><rect x="1.2" y="12" width="10.5" height="3.5" fill="none" stroke="#a6a6a6" stroke-width="1.2"/></svg>
<svg style="left:589px;top:1164.5px;" width="13" height="17" viewBox="0 0 13 17"><path d="M6.5 10 V1 M2.5 4.8 L6.5 0.8 L10.5 4.8" fill="none" stroke="#a6a6a6" stroke-width="1.3"/><rect x="1.2" y="12" width="10.5" height="3.5" fill="none" stroke="#a6a6a6" stroke-width="1.2"/></svg>
<div style="left:615px;top:1165px;width:1px;height:16px;background:#dedede;"></div>
<svg style="left:627px;top:1164.5px;" width="16" height="18" viewBox="0 0 16 18"><g fill="none" stroke="#6e6e6e" stroke-width="1.2"><path d="M1 4 V14.5 L5 17"/><path d="M3.5 3 V13.5 L7 16"/><path d="M6 2 L14.5 5 V17 L6 14 Z"/></g></svg>
<svg style="left:664px;top:1164px;" width="18" height="19" viewBox="0 0 18 19"><g fill="none" stroke="#6e6e6e" stroke-width="1.3"><circle cx="3.5" cy="3.5" r="2.6"/><circle cx="3.5" cy="15.5" r="2.6"/><circle cx="14.5" cy="9.5" r="2.6"/><path d="M5.7 5 L12 8.5 M5.7 14 L12 10.5"/></g></svg>
<svg style="left:703.5px;top:1164.5px;" width="16" height="17" viewBox="0 0 16 17"><g fill="none" stroke="#6e6e6e" stroke-width="1.3"><rect x="0.7" y="0.7" width="14.3" height="6.5" rx="3.25"/><rect x="0.7" y="9.5" width="14.3" height="6.5" rx="3.25"/></g><circle cx="4" cy="4" r="1.8" fill="#6e6e6e"/><circle cx="11.7" cy="12.8" r="1.8" fill="#6e6e6e"/></svg>
<svg style="left:740.5px;top:1164.5px;" width="18" height="18" viewBox="0 0 18 18"><path d="M17 1 L1 7.8 L8.3 9.6 L10.2 17 Z" fill="none" stroke="#6e6e6e" stroke-width="1.3" stroke-linejoin="round"/></svg>
<div style="left:768.5px;top:1165px;width:1px;height:16px;background:#dedede;"></div>
<svg style="left:778px;top:1162px;" width="21" height="21" viewBox="0 0 21 21"><rect x="0.6" y="0.6" width="19.8" height="19.8" rx="5" fill="#f0f0f0" stroke="#cfcfcf" stroke-width="0.8" stroke-dasharray="1 0.8"/><g fill="none" stroke="#c4c4c4" stroke-width="0.6"><circle cx="10.5" cy="10.5" r="6.5"/><circle cx="10.5" cy="10.5" r="3.5"/><path d="M0.6 10.5 H20.4 M10.5 0.6 V20.4 M3 3 L18 18 M18 3 L3 18"/></g></svg>
<div class="t" style="left:804.4px;top:1165.63px;font-size:14.7px;color:#363636;">GuardDemo</div>
<svg style="left:1484.5px;top:1165px;" width="17" height="16" viewBox="0 0 17 16"><rect x="0.7" y="0.7" width="15.3" height="14.6" rx="2.5" fill="none" stroke="#6e6e6e" stroke-width="1.3"/><rect x="3" y="10" width="11" height="3" rx="1" fill="#6e6e6e"/></svg>
<div style="left:919.5px;top:182.5px;width:400.5px;height:30.5px;box-sizing:border-box;background:#fff;border:1.3px solid #8c8c8c;border-radius:5px;"></div>
<svg style="left:1077px;top:190.5px;" width="15.5" height="15.5" viewBox="0 0 15.5 15.5"><circle cx="7.75" cy="7.75" r="7.75" fill="#fcc010"/><rect x="3.875" y="3.875" width="7.75" height="7.75" rx="0.6200000000000001" fill="#fff"/></svg>
<svg style="left:1113.5px;top:190.5px;" width="14" height="15.5" viewBox="0 0 14 15.5"><g transform="scale(0.75)"><path d="M9.2 0.5 L17.9 5 V15.2 L9.2 19.8 L0.5 15.2 V5 Z" fill="#f0a12b"/><path d="M0.5 5 L9.2 9.5 L17.9 5 M9.2 9.5 V19.8" stroke="#fff" stroke-opacity="0.45" stroke-width="0.7" fill="none"/><path d="M3.5 10.5 v4 l2 1 v-4z" fill="#fff" fill-opacity="0.85"/><path d="M13 11 l1.5 -0.8 v5 l-1 0.5z" fill="#fff"/></g></svg>
<svg style="left:1148px;top:190.5px;" width="15.5" height="15.5" viewBox="0 0 15.5 15.5"><g transform="scale(0.75)"><rect x="0" y="0" width="20.5" height="20.5" fill="#f0a12b"/><path d="M12.5 5 H4.5 V16 H12.5 M12.5 13.5" fill="none" stroke="#fff" stroke-width="1.5"/><path d="M8.5 10.5 H16.5 M14 8 L16.5 10.5 L14 13" fill="none" stroke="#fff" stroke-width="1.4"/></g></svg>
<svg style="left:918px;top:222px;" width="404" height="865" viewBox="0 0 404 865"><path d="M50 2.2 H367 C 395 2.2 401.3 20 401.3 52 V812 C401.3 845 393 862.2 352 862.2 H52 C 12 862.2 2.4 845 2.4 812 V52 C2.4 20 12 2.2 50 2.2 Z" fill="#fff" stroke="#1e1e1e" stroke-width="1.3"/><path d="M87 2 H316 C312 3 312 6 312 10 C312 24 302 34.5 286 34.5 H117 C101 34.5 92 24 92 10 C92 6 91 3 87 2 Z" fill="#000"/><rect x="131" y="850" width="142" height="5.5" rx="2.75" fill="#000"/></svg>
<div style="left:1068px;top:348.5px;width:104.5px;height:96px;box-sizing:border-box;background:#b7cce5;border:1.5px solid #d2d2d2;"></div>
<div class="t" style="left:820.5px;width:600px;text-align:center;top:390.25px;font-size:12.8px;color:#fff;font-weight:bold;">AppLogo</div>
<div style="left:940px;top:492.5px;width:359px;height:32.5px;box-sizing:border-box;border:1px solid #ebebeb;border-radius:5px;background:#fff;"></div>
<div style="left:936.7px;top:504.5px;width:8.5px;height:8.5px;box-sizing:border-box;border:1.4px solid #5a5a5a;background:#fff;border-radius:1.5px;"></div>
<div style="left:1294.5px;top:504.5px;width:8.5px;height:8.5px;box-sizing:border-box;border:1.4px solid #5a5a5a;background:#fff;border-radius:1.5px;"></div>
<svg style="left:820px;top:636px;" width="100" height="38" viewBox="0 0 100 38"><defs><linearGradient id="ag" gradientUnits="userSpaceOnUse" x1="3" x2="96" y1="0" y2="0"><stop offset="0" stop-color="#8a8a8a" stop-opacity="0"/><stop offset="0.55" stop-color="#8a8a8a" stop-opacity="1"/></linearGradient></defs><path d="M3 18.6 H96.5" stroke="url(#ag)" stroke-width="2"/><path d="M80.3 2.4 L97.2 18.6 L80.3 34.8" fill="none" stroke="#8a8a8a" stroke-width="2"/></svg>
<div style="left:1349.2px;top:194.7px;width:142.7px;height:257.3px;box-sizing:border-box;background:#e1e1e1;border:1px solid #c9c9c9;border-radius:8px;box-shadow:0 5px 18px rgba(0,0,0,0.16);"></div>
<div style="left:1350px;top:201px;width:141px;height:1px;background:#c4c4c4;"></div>
<div style="left:1350px;top:436px;width:141px;height:1px;background:#c9c9c9;"></div>
<div style="left:1350px;top:437px;width:141px;height:14px;background:#d9d9d9;border-radius:0 0 7px 7px;"></div>
<div style="left:1369.5px;top:215px;width:97.7px;height:213.3px;background:#fff;border-radius:8px;"></div>
<div style="left:1390.5px;top:214.5px;width:55.8px;height:8.4px;background:#000;border-radius:0 0 5px 5px;"></div>
<div style="left:1405.2px;top:245px;width:26.4px;height:24.6px;background:#b7cce5;"></div>
<div class="t" style="left:1118.4px;width:600px;text-align:center;top:255.35px;font-size:4px;color:#fff;font-weight:bold;">AppLogo</div>
<svg style="left:771.5px;top:1127px;" width="18" height="18" viewBox="0 0 18 18"><rect x="0.7" y="0.7" width="16" height="16" rx="3" fill="none" stroke="#6e6e6e" stroke-width="1.3"/><rect x="3.2" y="3" width="3.4" height="11.4" rx="1" fill="#6e6e6e"/></svg>
<svg style="left:801px;top:1127px;" width="18.5" height="18.5" viewBox="0 0 18.5 18.5"><circle cx="9.25" cy="9.25" r="8.4" fill="none" stroke="#6e6e6e" stroke-width="1.3"/><circle cx="9.25" cy="4.6" r="1.2" fill="#6e6e6e"/><path d="M4.2 6.8 L9.25 7.6 L14.3 6.8 M9.25 7.6 V10.5 L7.2 15 M9.25 10.5 L11.3 15" fill="none" stroke="#6e6e6e" stroke-width="1.2"/></svg>
<svg style="left:834px;top:1127px;" width="18.5" height="18.5" viewBox="0 0 18.5 18.5"><circle cx="9.25" cy="9.25" r="8.4" fill="none" stroke="#6e6e6e" stroke-width="1.3"/><path d="M9.25 0.85 A8.4 8.4 0 0 0 9.25 17.65 Z" fill="#6e6e6e"/><path d="M9.25 4.5 A4.75 4.75 0 0 1 9.25 14 Z" fill="#6e6e6e"/></svg>
<svg style="left:867px;top:1124.5px;" width="19.5" height="20" viewBox="0 0 19.5 20"><rect x="0.8" y="6.2" width="12.5" height="12.5" rx="1.8" fill="none" stroke="#6e6e6e" stroke-width="1.3"/><path d="M11 2.2 H13.5 C16.5 2.2 18.3 4 18.3 7 V8" fill="none" stroke="#6e6e6e" stroke-width="1.2"/><path d="M12.3 0.3 L10 2.2 L12.3 4.1" fill="none" stroke="#6e6e6e" stroke-width="1.2"/></svg>
<svg style="left:902px;top:1127px;" width="16" height="17" viewBox="0 0 16 17"><rect x="0.7" y="0.7" width="14.6" height="15.6" rx="2" fill="none" stroke="#c4c4c4" stroke-width="1.2"/><path d="M8 0.7 V16.3" stroke="#c4c4c4" stroke-width="1.2"/></svg>
<svg style="left:938px;top:1126.3px;" width="12" height="19" viewBox="0 0 12 19"><rect x="0.7" y="0.7" width="10.6" height="17.6" rx="2" fill="none" stroke="#6e6e6e" stroke-width="1.3"/><path d="M3.8 1.4 H8.2" stroke="#6e6e6e" stroke-width="1.3"/><path d="M4 16 H8" stroke="#6e6e6e" stroke-width="0.9"/></svg>
<div class="t" style="left:968.4px;top:1128.52px;font-size:13.9px;color:#767676;">iPhone 11</div>
<svg style="left:1086px;top:1125px;" width="20" height="20" viewBox="0 0 20 20"><circle cx="7.8" cy="7.8" r="6.8" fill="none" stroke="#6e6e6e" stroke-width="1.4"/><path d="M12.8 12.8 L18.5 18.5" stroke="#6e6e6e" stroke-width="1.6" stroke-linecap="round"/><path d="M4.5 7.8 H11.1" stroke="#6e6e6e" stroke-width="1.6"/></svg>
<div class="t" style="left:1124.7px;top:1128.57px;font-size:14.2px;color:#6e6e6e;">76%</div>
<svg style="left:1171.5px;top:1125px;" width="20" height="20" viewBox="0 0 20 20"><circle cx="7.8" cy="7.8" r="6.8" fill="none" stroke="#6e6e6e" stroke-width="1.4"/><path d="M12.8 12.8 L18.5 18.5" stroke="#6e6e6e" stroke-width="1.6" stroke-linecap="round"/><path d="M4.5 7.8 H11.1 M7.8 4.5 V11.1" stroke="#6e6e6e" stroke-width="1.6"/></svg>
<svg style="left:1349.5px;top:1126px;" width="20" height="20" viewBox="0 0 20 20"><path d="M1 5 V1 H5 M15 1 H19 V5 M19 15 V19 H15 M5 19 H1 V15" fill="none" stroke="#6e6e6e" stroke-width="1.3"/><path d="M7 14.5 A5 5 0 1 1 13.5 13.3" fill="none" stroke="#6e6e6e" stroke-width="1.3"/><path d="M8.8 12 L6 14.7 L8.8 17.3" fill="none" stroke="#6e6e6e" stroke-width="1.3"/></svg>
<svg style="left:1382.5px;top:1126px;" width="20" height="20" viewBox="0 0 20 20"><path d="M1 0.5 V19.5" stroke="#6e6e6e" stroke-width="1.4"/><rect x="3.6" y="2.8" width="11.5" height="5.5" rx="0.8" fill="none" stroke="#6e6e6e" stroke-width="1.3"/><rect x="3.6" y="11" width="15.5" height="5.5" rx="0.8" fill="none" stroke="#6e6e6e" stroke-width="1.3"/></svg>
<svg style="left:1415.5px;top:1126px;" width="20" height="20" viewBox="0 0 20 20"><rect x="5.5" y="5.3" width="8.5" height="8.5" fill="none" stroke="#6e6e6e" stroke-width="1.3"/><path d="M7.2 0.7 H12.3 M9.75 0.7 V5.3 M7.2 19.3 H12.3 M9.75 13.8 V19.3 M0.7 6.8 V12.3 M0.7 9.5 H5.5 M19 6.8 V12.3 M14 9.5 H19" fill="none" stroke="#6e6e6e" stroke-width="1.2"/></svg>
<svg style="left:1448.5px;top:1126px;" width="20" height="20" viewBox="0 0 20 20"><path d="M10 3.5 L15.5 14.2 H4.5 Z" fill="none" stroke="#6e6e6e" stroke-width="1.3" stroke-linejoin="round"/><circle cx="10" cy="10.5" r="1.2" fill="#6e6e6e"/><path d="M0.7 6.8 V12.3 M0.7 9.5 H4 M19 6.8 V12.3 M16 9.5 H19" fill="none" stroke="#6e6e6e" stroke-width="1.2"/></svg>
<svg style="left:1484px;top:1126px;" width="20" height="20" viewBox="0 0 20 20"><path d="M6 2 H1 V19 H18.5 V2 H13.5" fill="none" stroke="#6e6e6e" stroke-width="1.4"/><path d="M9.75 0.5 V10 M6 6.5 L9.75 10.2 L13.5 6.5" fill="none" stroke="#6e6e6e" stroke-width="1.3"/></svg>
<svg style="left:1563px;top:107px;" width="14" height="17" viewBox="0 0 14 17"><path d="M1.5 0.7 H8.5 L13 5.2 V15 A1.3 1.3 0 0 1 11.7 16.3 H2 A1.3 1.3 0 0 1 0.7 15 V1.5 A0.8 0.8 0 0 1 1.5 0.7 Z M8.5 0.7 V5.2 H13" fill="none" stroke="#6e6e6e" stroke-width="1.3" stroke-linejoin="round"/></svg>
<svg style="left:1599px;top:107px;" width="17" height="17" viewBox="0 0 17 17"><circle cx="8.5" cy="8.5" r="7.7" fill="none" stroke="#6e6e6e" stroke-width="1.4"/><path d="M8.5 3.8 V8.8 H5.3" fill="none" stroke="#6e6e6e" stroke-width="1.4"/></svg>
<svg style="left:1637px;top:107px;" width="17" height="17" viewBox="0 0 17 17"><circle cx="8.5" cy="8.5" r="7.7" fill="none" stroke="#6e6e6e" stroke-width="1.4"/><path d="M6.2 6.5 A2.4 2.4 0 1 1 9.5 8.6 C8.8 9 8.5 9.5 8.5 10.3" fill="none" stroke="#6e6e6e" stroke-width="1.4"/><circle cx="8.5" cy="12.6" r="0.9" fill="#6e6e6e"/></svg>
<svg style="left:1675px;top:108px;" width="17" height="14" viewBox="0 0 17 14"><rect x="0" y="0" width="17" height="14" rx="2.5" fill="#0a7aff"/><rect x="2.7" y="2.6" width="5.2" height="5.2" fill="#fff"/><path d="M9.6 3 H14.2 M9.6 5.2 H14.2 M9.6 7.4 H14.2 M2.7 10.7 H14.2" stroke="#fff" stroke-width="1.2"/></svg>
<svg style="left:1713px;top:107px;" width="17.5" height="16.5" viewBox="0 0 17.5 16.5"><path d="M0.5 2.3 H17 M0.5 8.3 H17 M0.5 14.2 H17" stroke="#6e6e6e" stroke-width="1.3"/><circle cx="12.2" cy="2.3" r="1.8" fill="#f3eded" stroke="#6e6e6e" stroke-width="1.2"/><circle cx="3.4" cy="8.3" r="1.8" fill="#f3eded" stroke="#6e6e6e" stroke-width="1.2"/><circle cx="12.2" cy="14.2" r="1.8" fill="#f3eded" stroke="#6e6e6e" stroke-width="1.2"/></svg>
<svg style="left:1751px;top:107px;" width="17" height="17" viewBox="0 0 17 17"><path d="M1 1 L16 16 H1 Z" fill="none" stroke="#6e6e6e" stroke-width="1.4" stroke-linejoin="round"/><path d="M4.2 8.8 L9 13.2 H4.2 Z" fill="none" stroke="#6e6e6e" stroke-width="1.2"/></svg>
<svg style="left:1788px;top:107px;" width="17" height="17" viewBox="0 0 17 17"><path d="M13.2 3.5 A6.5 6.5 0 1 0 13.2 13.5" fill="none" stroke="#6e6e6e" stroke-width="1.4"/><circle cx="8.5" cy="8.5" r="2.7" fill="#6e6e6e"/><path d="M8.5 8.5 H16.5" stroke="#6e6e6e" stroke-width="1.4"/></svg>
<div class="t" style="left:1528.1px;top:140.79px;font-size:15.8px;color:#808080;font-weight:bold;">Custom Class</div>
<div style="left:1568.5px;top:163.5px;width:275px;height:63px;box-sizing:border-box;border:2.7px solid #fe1b0b;"></div>
<div class="t" style="right:300.5px;top:176.76px;font-size:13.4px;color:#2a2a2a;">Class</div>
<div style="left:1626.5px;top:171px;width:213px;height:21px;box-sizing:border-box;background:#fff;border-radius:2px;box-shadow:0 0.5px 1.2px rgba(0,0,0,0.28), 0 0 0 0.4px rgba(0,0,0,0.08);border-radius:5px;"></div>
<div class="t" style="left:1630.8px;top:175.28px;font-size:14.6px;color:#2a2a2a;">EmailTextField</div>
<svg style="left:1801.5px;top:175px;" width="13" height="13" viewBox="0 0 13 13"><circle cx="6.5" cy="6.5" r="6.3" fill="#7d7d7d"/><path d="M3 6.5 H9.5 M6.8 3.6 L9.7 6.5 L6.8 9.4" fill="none" stroke="#fff" stroke-width="1.4"/></svg>
<svg style="left:1822px;top:173.8px;" width="15" height="15" viewBox="0 0 15 15"><rect x="0" y="0" width="15" height="15" rx="3.5" fill="#0a7aff"/><path d="M4.5 6 L7.5 9 L10.5 6" fill="none" stroke="#fff" stroke-width="1.5"/></svg>
<div class="t" style="right:300.5px;top:204.66px;font-size:13.4px;color:#2a2a2a;">Module</div>
<div style="left:1623px;top:195.5px;width:219px;height:27.3px;background:#82a8ee;border-radius:7px;"></div>
<div style="left:1627px;top:199.8px;width:211px;height:18.8px;background:#fff;border-radius:4px;"></div>
<div class="t" style="left:1630.8px;top:203.18px;font-size:14.6px;color:#2a2a2a;">Guard</div>
<svg style="left:1822px;top:201.6px;" width="15" height="15" viewBox="0 0 15 15"><rect x="0" y="0" width="15" height="15" rx="3.5" fill="#0a7aff"/><path d="M4.5 6 L7.5 9 L10.5 6" fill="none" stroke="#fff" stroke-width="1.5"/></svg>
<div style="left:1625.5px;top:229px;width:15px;height:15px;box-sizing:border-box;background:#fff;border-radius:3.2px;box-shadow:0 0.5px 1.5px rgba(0,0,0,0.25), 0 0 0 0.5px rgba(0,0,0,0.1);"></div>
<div class="t" style="left:1646.1px;top:229.17px;font-size:15.02px;color:#2a2a2a;">Inherit Module From Target</div>
<div style="left:1528.5px;top:263.5px;width:310px;height:1px;background:#dcd7d7;"></div>
<div class="t" style="left:1528.1px;top:272.79px;font-size:15.8px;color:#808080;font-weight:bold;">Identity</div>
<div class="t" style="right:300.5px;top:309.43px;font-size:13.46px;color:#2a2a2a;">Restoration ID</div>
<div style="left:1626.5px;top:305px;width:212px;height:20.3px;box-sizing:border-box;background:#fff;border-radius:2px;box-shadow:0 0.5px 1.2px rgba(0,0,0,0.28), 0 0 0 0.4px rgba(0,0,0,0.08);"></div>
<div style="left:1528.5px;top:342.5px;width:310px;height:1px;background:#dcd7d7;"></div>
<div class="t" style="left:1528.2px;top:350.94px;font-size:16.1px;color:#808080;font-weight:bold;">User Defined Runtime Attributes</div>
<div style="left:1529.4px;top:376.7px;width:309px;height:121.8px;box-sizing:border-box;background:#fff;border:1px solid #cfcfcf;"></div>
<div class="t" style="left:1540.3px;top:388.84px;font-size:14.05px;color:#2a2a2a;">Key Path</div>
<div style="left:1697.3px;top:385px;width:1px;height:19px;background:#dcdcdc;"></div>
<div class="t" style="left:1703px;top:388.84px;font-size:14.05px;color:#2a2a2a;">Type</div>
<div style="left:1783.7px;top:385px;width:1px;height:19px;background:#dcdcdc;"></div>
<div class="t" style="left:1788.6px;top:388.84px;font-size:14.05px;color:#2a2a2a;">Val...</div>
<div style="left:1530.4px;top:412.2px;width:307px;height:1px;background:#e2e2e2;"></div>
<svg style="left:1536.5px;top:481px;" width="14" height="13" viewBox="0 0 14 13"><path d="M7 0.5 V12.5 M0.5 6.5 H13.5" stroke="#555" stroke-width="1.5"/></svg>
<svg style="left:1561.5px;top:481px;" width="14" height="13" viewBox="0 0 14 13"><path d="M0.5 6.5 H13.5" stroke="#b5b5b5" stroke-width="1.5"/></svg>
<div style="left:1528.5px;top:509.8px;width:310px;height:1px;background:#dcd7d7;"></div>
<div class="t" style="left:1528.2px;top:519.59px;font-size:15.8px;color:#808080;font-weight:bold;">Document</div>
<div class="t" style="right:300.5px;top:554.52px;font-size:13.08px;color:#2a2a2a;">Label</div>
<div style="left:1626.5px;top:551.7px;width:212px;height:19.8px;box-sizing:border-box;background:#fff;border-radius:2px;box-shadow:0 0.5px 1.2px rgba(0,0,0,0.28), 0 0 0 0.4px rgba(0,0,0,0.08);"></div>
<div class="t" style="left:1631px;top:553.57px;font-size:14.81px;color:#c0c0c0;">Xcode Specific Label</div>
<svg style="left:1629px;top:584px;" width="11" height="11" viewBox="0 0 11 11"><path d="M1 1 L10 10 M10 1 L1 10" stroke="#333" stroke-width="1.6"/></svg>
<div style="left:1649.0px;top:583.2px;width:11px;height:10.5px;background:#f7a08f;border-radius:1.5px;box-shadow:0 0.5px 1px rgba(0,0,0,0.2);"></div>
<div style="left:1671.9px;top:583.2px;width:11px;height:10.5px;background:#f8c98e;border-radius:1.5px;box-shadow:0 0.5px 1px rgba(0,0,0,0.2);"></div>
<div style="left:1694.8px;top:583.2px;width:11px;height:10.5px;background:#f9e38f;border-radius:1.5px;box-shadow:0 0.5px 1px rgba(0,0,0,0.2);"></div>
<div style="left:1717.7px;top:583.2px;width:11px;height:10.5px;background:#c6e38d;border-radius:1.5px;box-shadow:0 0.5px 1px rgba(0,0,0,0.2);"></div>
<div style="left:1740.6px;top:583.2px;width:11px;height:10.5px;background:#98c2f8;border-radius:1.5px;box-shadow:0 0.5px 1px rgba(0,0,0,0.2);"></div>
<div style="left:1763.5px;top:583.2px;width:11px;height:10.5px;background:#d9bdf0;border-radius:1.5px;box-shadow:0 0.5px 1px rgba(0,0,0,0.2);"></div>
<div style="left:1786.4px;top:583.2px;width:11px;height:10.5px;background:#d3d3d3;border-radius:1.5px;box-shadow:0 0.5px 1px rgba(0,0,0,0.2);"></div>
<div class="t" style="right:300.5px;top:607.91px;font-size:13.51px;color:#2a2a2a;">Object ID</div>
<div class="t" style="left:1628.3px;top:607.42px;font-size:14.72px;color:#2a2a2a;">X7I-IN-MDT</div>
<div class="t" style="right:300.5px;top:633.96px;font-size:13.4px;color:#2a2a2a;">Lock</div>
<div style="left:1626.5px;top:630px;width:213.4px;height:20.3px;box-sizing:border-box;background:#fff;border-radius:2px;box-shadow:0 0.5px 1.2px rgba(0,0,0,0.28), 0 0 0 0.4px rgba(0,0,0,0.08);border-radius:5px;"></div>
<div class="t" style="left:1634.8px;top:632.87px;font-size:15.23px;color:#2a2a2a;">Inherited - (Nothing)</div>
<svg style="left:1822px;top:631.8px;" width="15" height="16.5" viewBox="0 0 15 16.5"><rect x="0" y="0" width="15" height="16.5" rx="3.5" fill="#0a7aff"/><path d="M4.8 6.3 L7.5 3.6 L10.2 6.3 M4.8 10.2 L7.5 12.9 L10.2 10.2" fill="none" stroke="#fff" stroke-width="1.3"/></svg>
<div class="t" style="right:300.5px;top:663.21px;font-size:13.7px;color:#2a2a2a;">Localizer Hint</div>
<div style="left:1626.5px;top:659.3px;width:212px;height:19.9px;box-sizing:border-box;background:#fff;border-radius:2px;box-shadow:0 0.5px 1.2px rgba(0,0,0,0.28), 0 0 0 0.4px rgba(0,0,0,0.08);"></div>
<div class="t" style="left:1631px;top:662.43px;font-size:14.69px;color:#c0c0c0;">Comment For Localizer</div>
<div style="left:1528.5px;top:696px;width:310px;height:1px;background:#dcd7d7;"></div>
<div class="t" style="left:1528.3px;top:705.59px;font-size:15.8px;color:#808080;font-weight:bold;">Accessibility</div>
<div class="t" style="right:300.5999999999999px;top:737.82px;font-size:13.9px;color:#2a2a2a;">Accessibility</div>
<svg style="left:1626.7px;top:737px;" width="15" height="15" viewBox="0 0 15 15"><rect x="0" y="0" width="15" height="15" rx="3.2" fill="#0a7aff"/><path d="M3.6 7.8 L6.3 10.8 L11.5 3.8" fill="none" stroke="#fff" stroke-width="1.9" stroke-linecap="round" stroke-linejoin="round"/></svg>
<div class="t" style="left:1647.3px;top:737.18px;font-size:14.6px;color:#2a2a2a;">Enabled</div>
<div class="t" style="right:300.5999999999999px;top:764.46px;font-size:13.4px;color:#2a2a2a;">Label</div>
<div style="left:1626.5px;top:760.4px;width:212px;height:21px;box-sizing:border-box;background:#fff;border-radius:2px;box-shadow:0 0.5px 1.2px rgba(0,0,0,0.28), 0 0 0 0.4px rgba(0,0,0,0.08);"></div>
<div class="t" style="left:1630.5px;top:763.88px;font-size:14.6px;color:#c0c0c0;">Label</div>
<div class="t" style="right:300.5999999999999px;top:793.76px;font-size:13.4px;color:#2a2a2a;">Hint</div>
<div style="left:1626.5px;top:789.8px;width:212px;height:21px;box-sizing:border-box;background:#fff;border-radius:2px;box-shadow:0 0.5px 1.2px rgba(0,0,0,0.28), 0 0 0 0.4px rgba(0,0,0,0.08);"></div>
<div class="t" style="left:1630.5px;top:793.18px;font-size:14.6px;color:#c0c0c0;">Hint</div>
<div class="t" style="right:300.5999999999999px;top:823.06px;font-size:13.4px;color:#2a2a2a;">Identifier</div>
<div style="left:1626.5px;top:818.9px;width:212px;height:21px;box-sizing:border-box;background:#fff;border-radius:2px;box-shadow:0 0.5px 1.2px rgba(0,0,0,0.28), 0 0 0 0.4px rgba(0,0,0,0.08);"></div>
<div class="t" style="left:1630.5px;top:822.48px;font-size:14.6px;color:#c0c0c0;">Identifier</div>
<div style="left:1528.5px;top:845.5px;width:310px;height:1px;background:#dcd7d7;"></div>
<div class="t" style="right:300.5999999999999px;top:854.46px;font-size:13.4px;color:#2a2a2a;">Traits</div>
<div style="left:1626.7px;top:853.5px;width:15px;height:15px;box-sizing:border-box;background:#fff;border-radius:3.2px;box-shadow:0 0.5px 1.5px rgba(0,0,0,0.25), 0 0 0 0.5px rgba(0,0,0,0.1);"></div>
<div class="t" style="left:1647.3px;top:853.73px;font-size:14.9px;color:#2a2a2a;">Button</div>
<div style="left:1626.7px;top:876.35px;width:15px;height:15px;box-sizing:border-box;background:#fff;border-radius:3.2px;box-shadow:0 0.5px 1.5px rgba(0,0,0,0.25), 0 0 0 0.5px rgba(0,0,0,0.1);"></div>
<div class="t" style="left:1647.3px;top:876.58px;font-size:14.9px;color:#2a2a2a;">Image</div>
<div style="left:1626.7px;top:899.2px;width:15px;height:15px;box-sizing:border-box;background:#fff;border-radius:3.2px;box-shadow:0 0.5px 1.5px rgba(0,0,0,0.25), 0 0 0 0.5px rgba(0,0,0,0.1);"></div>
<div class="t" style="left:1647.3px;top:899.43px;font-size:14.9px;color:#2a2a2a;">Static Text</div>
<div style="left:1626.7px;top:922.05px;width:15px;height:15px;box-sizing:border-box;background:#fff;border-radius:3.2px;box-shadow:0 0.5px 1.5px rgba(0,0,0,0.25), 0 0 0 0.5px rgba(0,0,0,0.1);"></div>
<div class="t" style="left:1647.3px;top:922.28px;font-size:14.9px;color:#2a2a2a;">Search Field</div>
<div style="left:1626.7px;top:944.9px;width:15px;height:15px;box-sizing:border-box;background:#fff;border-radius:3.2px;box-shadow:0 0.5px 1.5px rgba(0,0,0,0.25), 0 0 0 0.5px rgba(0,0,0,0.1);"></div>
<div class="t" style="left:1647.3px;top:945.13px;font-size:14.9px;color:#2a2a2a;">Plays Sound</div>
<div style="left:1626.7px;top:967.75px;width:15px;height:15px;box-sizing:border-box;background:#fff;border-radius:3.2px;box-shadow:0 0.5px 1.5px rgba(0,0,0,0.25), 0 0 0 0.5px rgba(0,0,0,0.1);"></div>
<div class="t" style="left:1647.3px;top:967.98px;font-size:14.9px;color:#2a2a2a;">Keyboard Key</div>
<div style="left:1626.7px;top:990.6px;width:15px;height:15px;box-sizing:border-box;background:#fff;border-radius:3.2px;box-shadow:0 0.5px 1.5px rgba(0,0,0,0.25), 0 0 0 0.5px rgba(0,0,0,0.1);"></div>
<div class="t" style="left:1647.3px;top:990.83px;font-size:14.9px;color:#2a2a2a;">Summary Element</div>
<svg style="left:1626.7px;top:1013.45px;" width="15" height="15" viewBox="0 0 15 15"><rect x="0" y="0" width="15" height="15" rx="3.2" fill="#0a7aff"/><path d="M3.6 7.8 L6.3 10.8 L11.5 3.8" fill="none" stroke="#fff" stroke-width="1.9" stroke-linecap="round" stroke-linejoin="round"/></svg>
<div class="t" style="left:1647.3px;top:1013.68px;font-size:14.9px;color:#2a2a2a;">User Interaction Enabled</div>
<div style="left:1626.7px;top:1036.3px;width:15px;height:15px;box-sizing:border-box;background:#fff;border-radius:3.2px;box-shadow:0 0.5px 1.5px rgba(0,0,0,0.25), 0 0 0 0.5px rgba(0,0,0,0.1);"></div>
<div class="t" style="left:1647.3px;top:1036.53px;font-size:14.9px;color:#2a2a2a;">Updates Frequently</div>
<div style="left:1626.7px;top:1059.15px;width:15px;height:15px;box-sizing:border-box;background:#fff;border-radius:3.2px;box-shadow:0 0.5px 1.5px rgba(0,0,0,0.25), 0 0 0 0.5px rgba(0,0,0,0.1);"></div>
<div class="t" style="left:1647.3px;top:1059.38px;font-size:14.9px;color:#2a2a2a;">Starts Media Session</div>
<div style="left:1626.7px;top:1082.0px;width:15px;height:15px;box-sizing:border-box;background:#fff;border-radius:3.2px;box-shadow:0 0.5px 1.5px rgba(0,0,0,0.25), 0 0 0 0.5px rgba(0,0,0,0.1);"></div>
<div class="t" style="left:1647.3px;top:1082.23px;font-size:14.9px;color:#2a2a2a;">Adjustable</div>
<div style="left:1626.7px;top:1104.85px;width:15px;height:15px;box-sizing:border-box;background:#fff;border-radius:3.2px;box-shadow:0 0.5px 1.5px rgba(0,0,0,0.25), 0 0 0 0.5px rgba(0,0,0,0.1);"></div>
<div class="t" style="left:1647.3px;top:1105.08px;font-size:14.9px;color:#2a2a2a;">Allows Direct Interaction</div>
<div style="left:1626.7px;top:1127.7px;width:15px;height:15px;box-sizing:border-box;background:#fff;border-radius:3.2px;box-shadow:0 0.5px 1.5px rgba(0,0,0,0.25), 0 0 0 0.5px rgba(0,0,0,0.1);"></div>
<div class="t" style="left:1647.3px;top:1127.93px;font-size:14.9px;color:#2a2a2a;">Causes Page Turn</div>
<div style="left:1626.7px;top:1150.55px;width:15px;height:15px;box-sizing:border-box;background:#fff;border-radius:3.2px;box-shadow:0 0.5px 1.5px rgba(0,0,0,0.25), 0 0 0 0.5px rgba(0,0,0,0.1);"></div>
<div class="t" style="left:1647.3px;top:1150.78px;font-size:14.9px;color:#2a2a2a;">Header</div>
<div style="left:1738.4px;top:853.5px;width:15px;height:15px;box-sizing:border-box;background:#fff;border-radius:3.2px;box-shadow:0 0.5px 1.5px rgba(0,0,0,0.25), 0 0 0 0.5px rgba(0,0,0,0.1);"></div>
<div class="t" style="left:1759px;top:853.73px;font-size:14.9px;color:#2a2a2a;">Link</div>
<div style="left:1738.4px;top:876.35px;width:15px;height:15px;box-sizing:border-box;background:#fff;border-radius:3.2px;box-shadow:0 0.5px 1.5px rgba(0,0,0,0.25), 0 0 0 0.5px rgba(0,0,0,0.1);"></div>
<div class="t" style="left:1759px;top:876.58px;font-size:14.9px;color:#2a2a2a;">Selected</div>
<div style="left:1528.5px;top:1181.8px;width:310px;height:1px;background:#dcd7d7;"></div></div></body></html>
